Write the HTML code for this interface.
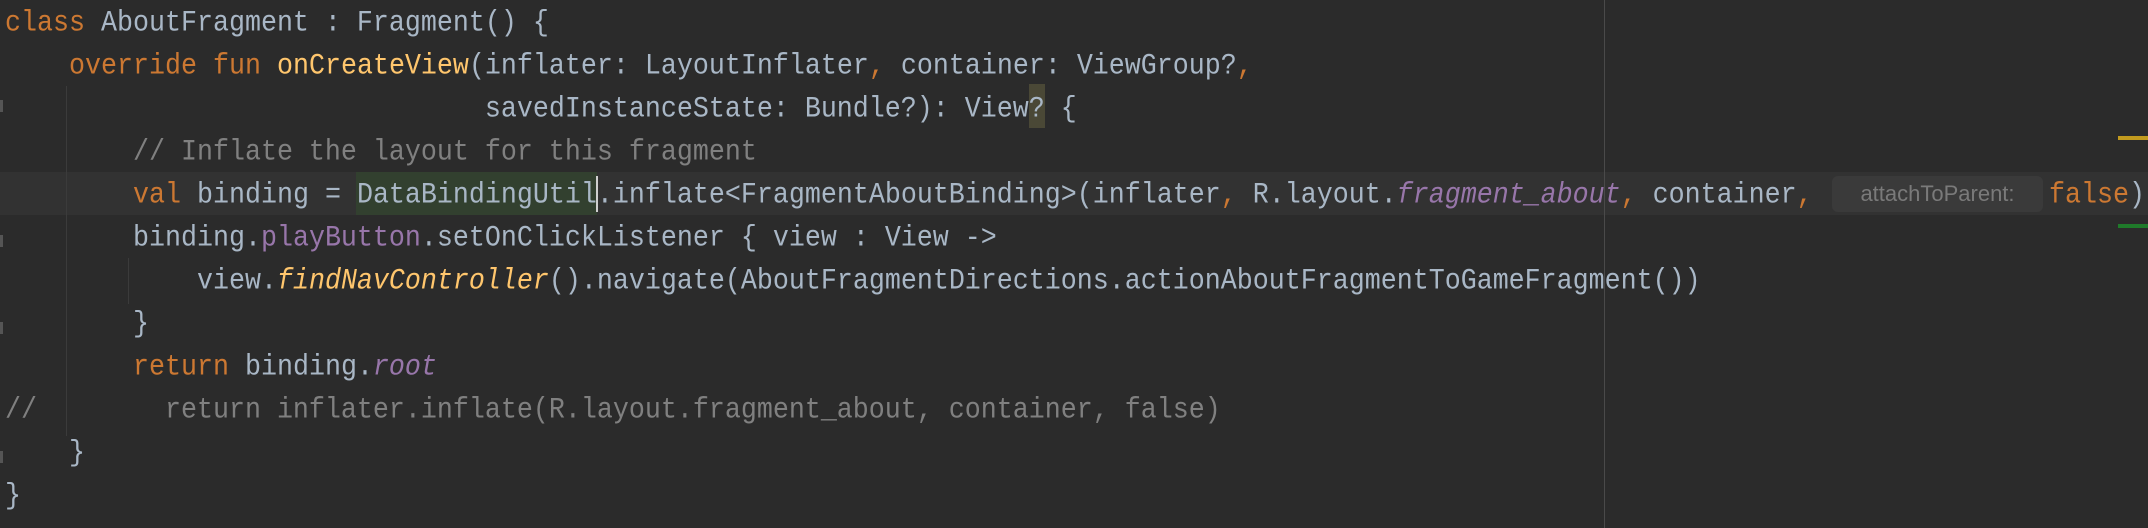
<!DOCTYPE html>
<html><head><meta charset="utf-8"><style>
html,body{margin:0;padding:0;background:#2b2b2b;width:2148px;height:528px;overflow:hidden}
.ed{position:relative;width:2148px;height:528px}
.ln{position:absolute;left:5px;height:43px;line-height:43px;font-family:"Liberation Mono",monospace;font-size:26.67px;color:#a9b7c6;white-space:pre;letter-spacing:0;margin-top:3px;transform:scaleY(1.1);transform-origin:0 50%}
.k{color:#cc7832}.f{color:#ffc66d}.p{color:#9876aa}.i{font-style:italic}.c{color:#808080}
.abs{position:absolute}
.hint{position:absolute;left:1832px;top:176px;width:211px;height:36px;background:#3a3a3a;border-radius:6px;color:#7a7a7a;font-family:"Liberation Sans",sans-serif;font-size:22px;line-height:36px;text-align:center}
</style></head><body><div class="ed">
<div class="abs" style="left:0;top:172px;width:2148px;height:43px;background:#323232"></div>
<div class="abs" style="left:356px;top:172px;width:241px;height:43px;background:#32402f"></div>
<div class="abs" style="left:1029px;top:84px;width:16px;height:44px;background:#4a4836"></div>
<div class="abs" style="left:1604px;top:0;width:1px;height:528px;background:#4a4a4a"></div>
<div class="abs" style="left:66px;top:86px;width:1px;height:350px;background:#3b3b3b"></div>
<div class="abs" style="left:128px;top:258px;width:1px;height:46px;background:#3b3b3b"></div>
<div class="abs" style="left:0;top:100px;width:3px;height:12px;background:#555"></div>
<div class="abs" style="left:0;top:235px;width:3px;height:12px;background:#555"></div>
<div class="abs" style="left:0;top:322px;width:3px;height:12px;background:#555"></div>
<div class="abs" style="left:0;top:451px;width:3px;height:12px;background:#555"></div>
<div class="abs" style="left:2118px;top:136px;width:30px;height:4px;background:#c29a1e"></div>
<div class="abs" style="left:2118px;top:224px;width:30px;height:4px;background:#1f7a2a"></div>

<div class="ln" style="top:0"><span class="k">class</span> AboutFragment : Fragment() {</div>
<div class="ln" style="top:43px">    <span class="k">override fun</span> <span class="f">onCreateView</span>(inflater: LayoutInflater<span class="k">,</span> container: ViewGroup?<span class="k">,</span></div>
<div class="ln" style="top:86px">                              savedInstanceState: Bundle?): View? {</div>
<div class="ln c" style="top:129px">        // Inflate the layout for this fragment</div>
<div class="ln" style="top:172px">        <span class="k">val</span> binding = DataBindingUtil.inflate&lt;FragmentAboutBinding&gt;(inflater<span class="k">,</span> R.layout.<span class="p i">fragment_about</span><span class="k">,</span> container<span class="k">,</span></div>
<div class="hint">attachToParent:</div>
<div class="ln" style="top:172px;left:2049px"><span class="k">false</span>)</div>
<div class="abs" style="left:596px;top:176px;width:2px;height:36px;background:#cfcfcf"></div>
<div class="ln" style="top:215px">        binding.<span class="p">playButton</span>.setOnClickListener { view : View -&gt;</div>
<div class="ln" style="top:258px">            view.<span class="f i">findNavController</span>().navigate(AboutFragmentDirections.actionAboutFragmentToGameFragment())</div>
<div class="ln" style="top:301px">        }</div>
<div class="ln" style="top:344px">        <span class="k">return</span> binding.<span class="p i">root</span></div>
<div class="ln c" style="top:387px">//        return inflater.inflate(R.layout.fragment_about, container, false)</div>
<div class="ln" style="top:430px">    }</div>
<div class="ln" style="top:473px">}</div>
</div></body></html>
